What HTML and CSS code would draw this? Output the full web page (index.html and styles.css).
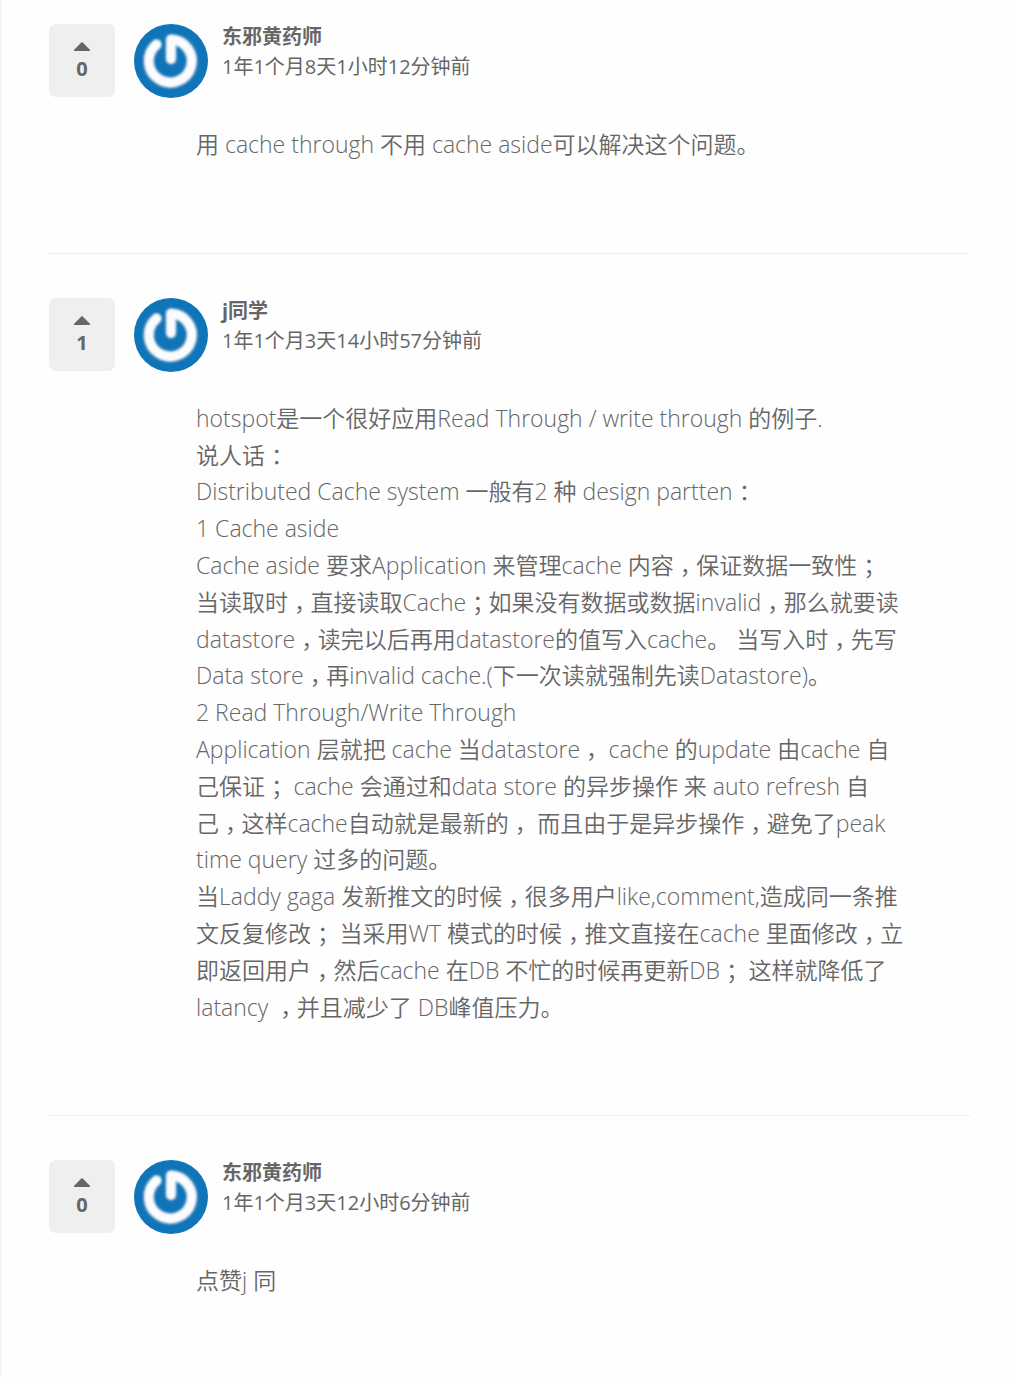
FILE: index.html
```html
<!DOCTYPE html>
<html lang="zh-CN">
<head>
<meta charset="utf-8">
<meta name="viewport" content="width=device-width, initial-scale=1">
<title>讨论</title>
<link rel="stylesheet" href="styles.css">
</head>
<body>
<svg class="defs" aria-hidden="true">
  <defs>
    <filter id="soft" x="-20%" y="-20%" width="140%" height="140%"><feGaussianBlur stdDeviation="0.8"/></filter>
  </defs>
  <symbol id="power" viewBox="0 0 74 74">
    <circle cx="37" cy="37" r="37" fill="#0f75b8"/>
    <g fill="none" stroke-linecap="round" stroke-linejoin="round" filter="url(#soft)">
      <path d="M22.500 20.500A21.500 21.500 0 1 0 37 15.500V35" stroke="#7fa9cb" stroke-width="11.500"/>
      <path d="M22.500 20.500A21.500 21.500 0 1 0 37 15.500V35" stroke="#fafcfe" stroke-width="9"/>
    </g>
  </symbol>
  <symbol id="caret" viewBox="0 0 16 9"><path d="M7.300.4a1 1 0 0 1 1.400 0l6.900 7.100a.8.8 0 0 1-.6 1.500H1a.8.8 0 0 1-.6-1.500z" fill="#666"/></symbol>
</svg>
<main class="thread">
  <article class="post">
    <header class="post-head">
      <button class="vote" type="button" aria-label="赞同"><svg class="caret"><use href="#caret"/></svg><span>0</span></button>
      <svg class="avatar" aria-hidden="true"><use href="#power"/></svg>
      <div class="meta"><strong class="author">东邪黄药师</strong><time class="date">1年1个月8天1小时12分钟前</time></div>
    </header>
    <div class="post-body">
      <p>用 cache through 不用 cache aside可以解决这个问题。</p>
    </div>
  </article>
  <article class="post">
    <header class="post-head">
      <button class="vote" type="button" aria-label="赞同"><svg class="caret"><use href="#caret"/></svg><span>1</span></button>
      <svg class="avatar" aria-hidden="true"><use href="#power"/></svg>
      <div class="meta"><strong class="author">j同学</strong><time class="date">1年1个月3天14小时57分钟前</time></div>
    </header>
    <div class="post-body">
      <p>hotspot是一个很好应用Read Through / write through 的例子.</p>
      <p>说人话<span class="mark">：</span></p>
      <p>Distributed Cache system 一般有2 种 design partten<span class="mark">：</span></p>
      <p>1 Cache aside</p>
      <p>Cache aside 要求Application 来管理cache 内容<span class="mark">，</span>保证数据一致性<span class="mark">；</span><br>当读取时<span class="mark">，</span>直接读取Cache<span class="mark">；</span>如果没有数据或数据invalid<span class="mark">，</span>那么就要读<br>datastore<span class="mark">，</span>读完以后再用datastore的值写入cache。 当写入时<span class="mark">，</span>先写<br>Data store<span class="mark">，</span>再invalid cache.(下一次读就强制先读Datastore)。</p>
      <p>2 Read Through/Write Through</p>
      <p>Application 层就把 cache 当datastore<span class="mark">，</span> cache 的update 由cache 自<br>己保证<span class="mark">；</span> cache 会通过和data store 的异步操作 来 auto refresh 自<br>己<span class="mark">，</span>这样cache自动就是最新的<span class="mark">，</span> 而且由于是异步操作<span class="mark">，</span>避免了peak<br>time query 过多的问题。</p>
      <p>当Laddy gaga 发新推文的时候<span class="mark">，</span>很多用户like,comment,造成同一条推<br>文反复修改<span class="mark">；</span> 当采用WT 模式的时候<span class="mark">，</span>推文直接在cache 里面修改<span class="mark">，</span>立<br>即返回用户<span class="mark">，</span>然后cache 在DB 不忙的时候再更新DB<span class="mark">；</span> 这样就降低了<br>latancy <span class="mark">，</span>并且减少了 DB峰值压力。</p>
    </div>
  </article>
  <article class="post">
    <header class="post-head">
      <button class="vote" type="button" aria-label="赞同"><svg class="caret"><use href="#caret"/></svg><span>0</span></button>
      <svg class="avatar" aria-hidden="true"><use href="#power"/></svg>
      <div class="meta"><strong class="author">东邪黄药师</strong><time class="date">1年1个月3天12小时6分钟前</time></div>
    </header>
    <div class="post-body">
      <p>点赞j 同</p>
    </div>
  </article>
</main>
</body>
</html>
```
FILE: styles.css
```css
* {
  box-sizing: border-box;
}

body {
  margin: 0;
  background: #fefefe;
  color: #666;
  font-family: "Open Sans", "Noto Sans CJK SC", sans-serif;
  font-size: 20px;
  line-height: 30px;
}

.defs {
  position: absolute;
  width: 0;
  height: 0;
}

.thread {
  min-height: 100vh;
  padding: 24px 45px 0 46px;
  border-left: 2px solid #f5f5f5;
}

.post {
  padding-bottom: 90px;
}

.post:last-child {
  padding-bottom: 40px;
}

.post + .post {
  padding-top: 44px;
  border-top: 1px solid #eee;
}

.post-head {
  display: flex;
  align-items: flex-start;
  padding-left: 1px;
}

.vote {
  display: flex;
  flex-direction: column;
  align-items: center;
  gap: 2px;
  width: 66px;
  height: 73px;
  padding: 18px 0 0;
  border: 0;
  border-radius: 7px;
  background: #efefef;
  color: #666;
  font: inherit;
  font-weight: 700;
  line-height: 32px;
  cursor: pointer;
}

.caret {
  flex: none;
  width: 16px;
  height: 9px;
}

.avatar {
  flex: none;
  width: 74px;
  height: 74px;
  margin: 0 14px 0 19px;
}

.meta {
  display: flex;
  flex-direction: column;
  margin-top: -2px;
}

.author {
  font-weight: 700;
}

.post-body {
  margin: 28px 55px 0 148px;
  font-size: 23px;
  font-weight: 350;
  line-height: 1.6;
}

.post-body p {
  margin: 0;
}

/* Half-width punctuation, padded so that it sits in the middle of its cell */
.mark {
  padding: 0 5px 0 6px;
  font-feature-settings: "halt";
}
```
